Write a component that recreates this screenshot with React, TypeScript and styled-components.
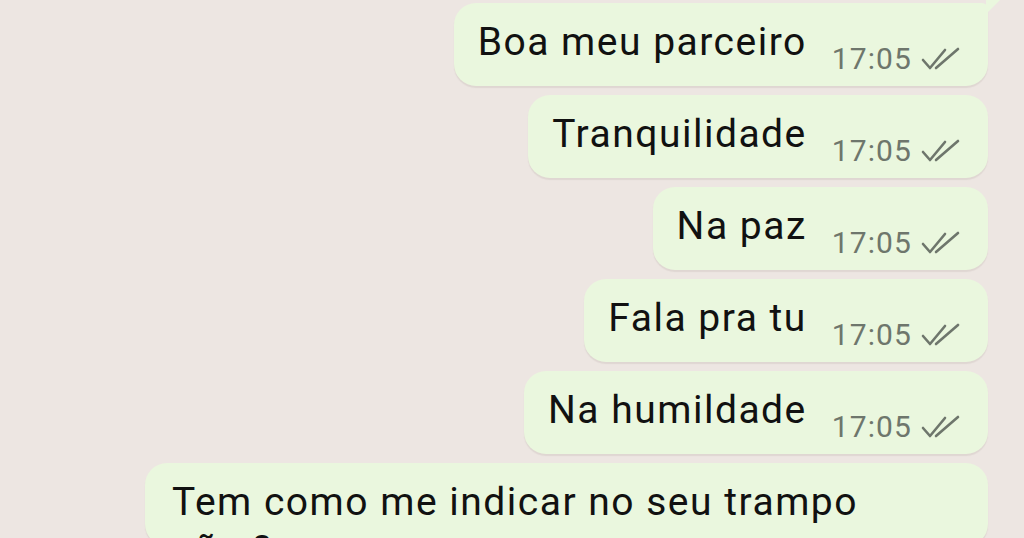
import React from "react";
import styled, { createGlobalStyle } from "styled-components";

const Global = createGlobalStyle`
  html, body { margin: 0; padding: 0; }
  body {
    width: 1024px;
    height: 538px;
    overflow: hidden;
    background: #ede6e2;
    font-family: Roboto, "Noto Sans", sans-serif;
  }
`;

const Chat = styled.div`
  width: 1024px;
  height: 538px;
  box-sizing: border-box;
  padding: 3px 36px 0 145px;
  display: flex;
  flex-direction: column;
  align-items: flex-end;
  gap: 9px;
  overflow: hidden;
  background: #ede6e2;
`;

const Bubble = styled.div<{ $first?: boolean; $wide?: boolean }>`
  position: relative;
  box-sizing: border-box;
  min-height: 83px;
  display: flex;
  align-items: flex-start;
  padding: 0 28px 0 ${(p) => (p.$wide ? "27px" : "24px")};
  background: #eaf7de;
  border-radius: 22px;
  border-top-right-radius: ${(p) => (p.$first ? "6px" : "22px")};
  box-shadow: 0 2px 1px rgba(120, 110, 100, 0.12);
  align-self: ${(p) => (p.$wide ? "stretch" : "flex-end")};
`;

const Tail = styled.div`
  position: absolute;
  top: -3px;
  right: -12px;
  width: 0;
  height: 0;
  border-top: 14px solid #eaf7de;
  border-right: 14px solid transparent;
`;

const Text = styled.div`
  font-size: 39px;
  line-height: 48px;
  margin-top: 15px;
  color: #111;
  letter-spacing: 1.5px;
  white-space: pre-wrap;
`;

const Meta = styled.div`
  display: flex;
  align-items: flex-end;
  gap: 8px;
  margin-left: 25px;
  margin-top: 39px;
  color: #6e766c;
`;

const Time = styled.span`
  font-size: 30px;
  line-height: 34px;
  letter-spacing: 1.1px;
`;

const Ticks = styled.svg`
  width: 40px;
  height: 24px;
  margin-bottom: 5px;
`;

const TickIcon = () => (
  <Ticks viewBox="0 0 40 24" fill="none" stroke="#6e766c" strokeWidth="2.6" strokeLinecap="round" strokeLinejoin="round">
    <path d="M3 13 L10 21 L25 3" />
    <path d="M16 21 L38 2" />
  </Ticks>
);

const messages = ["Boa meu parceiro", "Tranquilidade", "Na paz", "Fala pra tu", "Na humildade"];

export default function App() {
  return (
    <>
      <Global />
      <Chat>
        {messages.map((m, i) => (
          <Bubble key={m} $first={i === 0}>
            {i === 0 && <Tail />}
            <Text>{m}</Text>
            <Meta>
              <Time>17:05</Time>
              <TickIcon />
            </Meta>
          </Bubble>
        ))}
        <Bubble $wide>
          <Text>{"Tem como me indicar no seu trampo\nnão ?"}</Text>
        </Bubble>
      </Chat>
    </>
  );
}
